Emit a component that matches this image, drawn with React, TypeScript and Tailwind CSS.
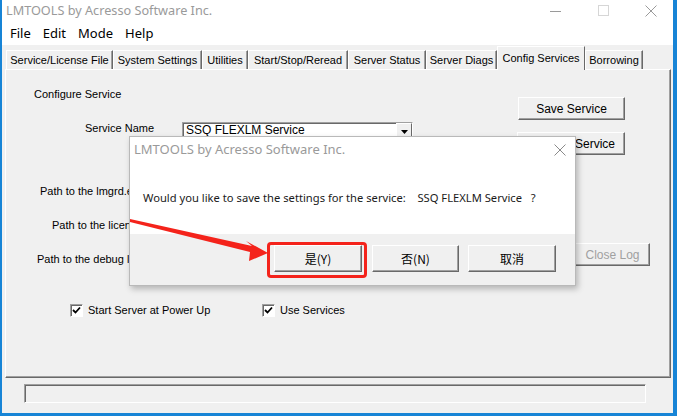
import type { ReactNode } from 'react';

const tabs = [
  { label: 'Service/License File', w: 107 },
  { label: 'System Settings', w: 89 },
  { label: 'Utilities', w: 46 },
  { label: 'Start/Stop/Reread', w: 100 },
  { label: 'Server Status', w: 78 },
  { label: 'Server Diags', w: 71 },
  { label: 'Config Services', w: 88, active: true },
  { label: 'Borrowing', w: 58 },
];

function WinButton({ children, className = '', disabled = false }: { children: ReactNode; className?: string; disabled?: boolean }) {
  return (
    <div
      className={`flex items-center justify-center border border-t-white border-l-white border-r-[#696969] border-b-[#696969] bg-[#f0f0f0] shadow-[inset_-1px_-1px_0_#a0a0a0] ${
        disabled ? 'text-[#a0a0a0]' : 'text-black'
      } ${className}`}
    >
      {children}
    </div>
  );
}

function CheckBox({ label }: { label: string }) {
  return (
    <div className="flex items-center">
      <div className="flex h-[13px] w-[13px] items-center justify-center border border-t-[#a0a0a0] border-l-[#a0a0a0] border-r-white border-b-white bg-white shadow-[inset_1px_1px_0_#696969]">
        <svg width="9" height="9" viewBox="0 0 9 9">
          <path d="M1 4 L3.5 6.5 L8 1.5" stroke="#000" strokeWidth="1.8" fill="none" />
        </svg>
      </div>
      <span className="ml-[5px]">{label}</span>
    </div>
  );
}

export default function App() {
  return (
    <div className="relative h-[416px] w-[677px] overflow-hidden bg-[#1784d6] pb-[3px] pl-[2px] pr-[4px] font-['Liberation_Sans',Arial,sans-serif] text-[11px] text-black">
      <div className="flex h-full flex-col bg-[#f0f0f0]">
        {/* title bar */}
        <div className="flex h-[22px] items-center bg-white pl-[4px] font-['Noto_Sans',sans-serif] text-[12.7px] text-[#9a9a9a]">
          <span>LMTOOLS by Acresso Software Inc.</span>
          <div className="ml-auto flex items-center">
            <svg width="12" height="12" viewBox="0 0 12 12" className="mr-[36px]">
              <path d="M0 6.5 H11" stroke="#9a9a9a" strokeWidth="1" />
            </svg>
            <svg width="12" height="12" viewBox="0 0 12 12" className="mr-[35px]">
              <rect x="0.5" y="0.5" width="10" height="10" stroke="#d6d6d6" fill="none" />
            </svg>
            <svg width="12" height="12" viewBox="0 0 12 12" className="mr-[16px]">
              <path d="M0.5 0.5 L11.5 11.5 M11.5 0.5 L0.5 11.5" stroke="#9a9a9a" strokeWidth="1" />
            </svg>
          </div>
        </div>
        {/* menu */}
        <div className="flex h-[23px] items-center gap-[12px] bg-white pl-[8px] font-['Noto_Sans',sans-serif] text-[13px]">
          <span>File</span>
          <span>Edit</span>
          <span>Mode</span>
          <span>Help</span>
        </div>
        {/* tabs */}
        <div className="mt-[1px] flex h-[23px] items-end pl-[4px]">
          {tabs.map((t) =>
            t.active ? (
              <div
                key={t.label}
                style={{ width: t.w }}
                className="relative z-10 -mb-[1px] flex h-[24px] items-start justify-center border-l border-t border-r border-l-white border-t-white border-r-[#696969] bg-[#f0f0f0] pt-[3px]"
              >
                {t.label}
              </div>
            ) : (
              <div
                key={t.label}
                style={{ width: t.w }}
                className="flex h-[19px] items-center justify-center border-l border-t border-r border-l-white border-t-white border-r-[#696969] shadow-[inset_-1px_0_0_#a0a0a0]"
              >
                {t.label}
              </div>
            )
          )}
        </div>
        {/* panel */}
        <div className="ml-[3px] flex h-[309px] w-[666px] flex-col border border-t-white border-l-white border-r-[#696969] border-b-[#696969] shadow-[inset_-1px_-1px_0_#a0a0a0]">
          <div className="flex h-[50px]">
            <div className="w-[512px] pl-[28px] pt-[16px]">Configure Service</div>
            <WinButton className="mt-[27px] h-[23px] w-[107px] text-[12px]">Save Service</WinButton>
          </div>
          <div className="flex h-[35px]">
            <div className="flex w-[511px]">
              <div className="w-[176px] pl-[79px]">Service Name</div>
              <div className="mt-[2px] flex h-[21px] w-[231px] border border-t-[#a0a0a0] border-l-[#a0a0a0] border-r-white border-b-white bg-white shadow-[inset_1px_1px_0_#696969]">
                <span className="flex-1 pl-[3px] text-[12px] leading-[15px]">SSQ FLEXLM Service</span>
                <div className="flex h-[17px] w-[16px] items-center justify-center border border-t-white border-l-white border-r-[#696969] border-b-[#696969] bg-[#f0f0f0]">
                  <svg width="7" height="4" viewBox="0 0 7 4">
                    <path d="M0 0 H7 L3.5 4 Z" fill="#000" />
                  </svg>
                </div>
              </div>
            </div>
            <WinButton className="mt-[12px] h-[23px] w-[108px] text-[12px]">Remove Service</WinButton>
          </div>
          <div className="h-[50px] pl-[34px] pt-[28px]">Path to the lmgrd.exe file</div>
          <div className="h-[35px] pl-[46px] pt-[12px]">Path to the license file</div>
          <div className="flex h-[35px]">
            <div className="w-[569px] pl-[31px] pt-[11px]">Path to the debug log file</div>
            <WinButton disabled className="mt-[3px] h-[23px] w-[75px] text-[12px]">Close Log</WinButton>
          </div>
          <div className="flex items-center pl-[64px] pt-[27px]">
            <div className="w-[192px]">
              <CheckBox label="Start Server at Power Up" />
            </div>
            <CheckBox label="Use Services" />
          </div>
        </div>
        {/* status bar */}
        <div className="ml-[22px] mt-[6px] h-[19px] w-[622px] border border-t-[#a0a0a0] border-l-[#a0a0a0] border-r-white border-b-white shadow-[inset_1px_1px_0_#696969]" />
      </div>

      {/* message box */}
      <div className="absolute left-[129px] top-[136px] flex h-[150px] w-[447px] flex-col border border-[#b9b9b9] bg-white font-['Noto_Sans','Noto_Sans_CJK_SC',sans-serif] text-[11px] shadow-[2px_3px_6px_rgba(0,0,0,0.25)]">
        <div className="flex h-[26px] items-center pl-[4px] text-[13px] text-[#9a9a9a]">
          <span>LMTOOLS by Acresso Software Inc.</span>
          <svg width="12" height="12" viewBox="0 0 12 12" className="ml-auto mr-[9px]">
            <path d="M0.5 0.5 L11.5 11.5 M11.5 0.5 L0.5 11.5" stroke="#8a8a8a" strokeWidth="1" />
          </svg>
        </div>
        <div className="h-[71px] pl-[13px] pt-[27px] text-[11.2px] text-[#1a1a1a]">
          Would you like to save the settings for the service:&nbsp;&nbsp;&nbsp;&nbsp;SSQ FLEXLM Service&nbsp;&nbsp;&nbsp;?
        </div>
        <div className="flex flex-1 bg-[#f0f0f0] pl-[144px] pt-[11px] font-['Noto_Sans_CJK_SC',sans-serif] text-[12px]">
          <WinButton className="h-[27px] w-[88px]">是(Y)</WinButton>
          <WinButton className="ml-[10px] h-[27px] w-[87px]">否(N)</WinButton>
          <WinButton className="ml-[9px] h-[27px] w-[88px]">取消</WinButton>
        </div>
      </div>

      {/* annotation: red box + arrow */}
      <div className="absolute left-[267px] top-[242px] h-[36px] w-[100px] rounded-[4px] border-[3px] border-[#f4231b]" />
      <svg className="absolute left-0 top-0" width="677" height="416" viewBox="0 0 677 416">
        <polygon points="130,219 252,246 246,241 268,253 249,261 250,252 130,222" fill="#f4231b" />
      </svg>
    </div>
  );
}
